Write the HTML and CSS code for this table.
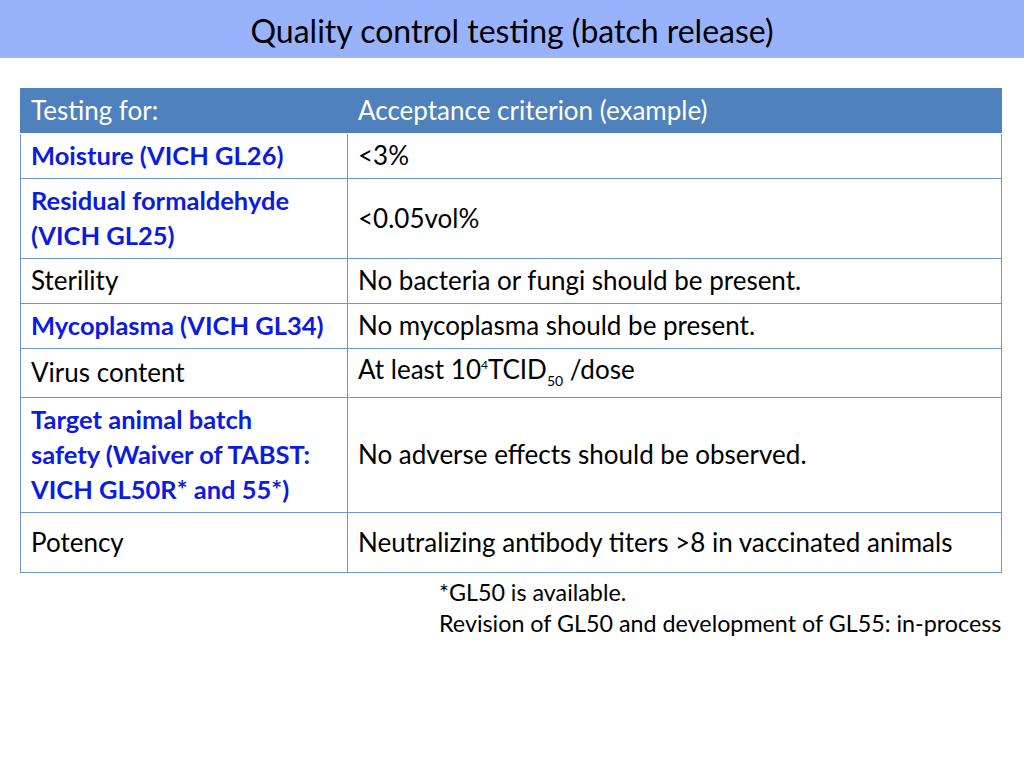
FILE: index.html
```html
<!DOCTYPE html>
<html lang="en">
<head>
<meta charset="utf-8">
<title>Quality control testing (batch release)</title>
<link rel="stylesheet" href="styles.css">
</head>
<body>
<header class="title-bar">
  <h1 class="title">Quality control testing (batch release)</h1>
</header>
<main class="content">
  <table class="qc-table">
    <colgroup>
      <col class="col-test">
      <col class="col-crit">
    </colgroup>
    <thead>
      <tr class="head-row">
        <th>Testing for:</th>
        <th>Acceptance criterion (example)</th>
      </tr>
    </thead>
    <tbody>
      <tr>
        <td class="vich">Moisture (VICH GL26)</td>
        <td>&lt;3%</td>
      </tr>
      <tr>
        <td class="vich">Residual formaldehyde<br>(VICH GL25)</td>
        <td>&lt;0.05vol%</td>
      </tr>
      <tr>
        <td>Sterility</td>
        <td>No bacteria or fungi should be present.</td>
      </tr>
      <tr>
        <td class="vich">Mycoplasma (VICH GL34)</td>
        <td>No mycoplasma should be present.</td>
      </tr>
      <tr class="virus-row">
        <td>Virus content</td>
        <td class="virus">At least 10<sup>4</sup>TCID<sub>50</sub> /dose</td>
      </tr>
      <tr>
        <td class="vich">Target animal batch<br>safety (Waiver of TABST:<br>VICH GL50R* and 55*)</td>
        <td>No adverse effects should be observed.</td>
      </tr>
      <tr class="potency-row">
        <td>Potency</td>
        <td>Neutralizing antibody titers &gt;8 in vaccinated animals</td>
      </tr>
    </tbody>
  </table>
  <div class="footnote">
    <p>*GL50 is available.</p>
    <p>Revision of GL50 and development of GL55: in-process</p>
  </div>
</main>
</body>
</html>
```

FILE: styles.css
```css
html, body {
  margin: 0;
  padding: 0;
  background: #ffffff;
}

body {
  font-family: Lato, "Open Sans", sans-serif;
  color: #000000;
  width: 1024px;
  height: 768px;
  overflow: hidden;
}

.title-bar {
  height: 58px;
  background: #98b2fc;
  display: flex;
  align-items: center;
  justify-content: center;
}

.title {
  margin: 0;
  font-weight: 400;
  font-size: 32px;
  line-height: 1;
  padding-top: 6px;
  padding-bottom: 2px;
  color: #000;
}

.content {
  padding: 30px 24px 0 20px;
}

.qc-table {
  width: 981px;
  border-collapse: collapse;
  table-layout: fixed;
  font-size: 26px;
  line-height: 35px;
}

.col-test { width: 327px; }
.col-crit { width: 654px; }

.qc-table th,
.qc-table td {
  border: 1px solid #6b95d2;
  padding: 4px 10px 5px 10px;
  text-align: left;
  vertical-align: middle;
}

.head-row th {
  background: #4f81bd;
  color: #ffffff;
  font-weight: 400;
  height: 34px;
  border-color: #4f81bd;
  border-bottom-color: #ffffff;
}

.qc-table td.vich {
  color: #0b1be0;
  font-weight: 700;
  font-size: 25.5px;
}

.virus-row td {
  height: 38px;
}

.qc-table td.virus {
  padding-top: 1px;
  padding-bottom: 9px;
}

.virus sup {
  font-size: 12px;
  vertical-align: 10px;
  line-height: 0;
}

.virus sub {
  font-size: 14px;
  vertical-align: -7px;
  line-height: 0;
}

.potency-row td {
  height: 50px;
}

.footnote {
  margin: 4px 0 0 419px;
  font-size: 23.3px;
  line-height: 31px;
}

.footnote p {
  margin: 0;
  white-space: nowrap;
}
```
